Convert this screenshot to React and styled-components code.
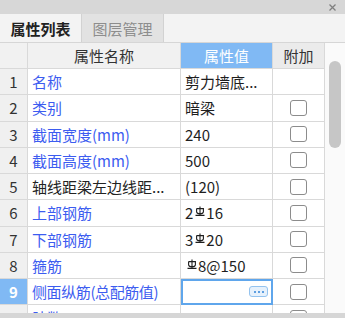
import React from 'react';
import styled, { createGlobalStyle } from 'styled-components';

const GlobalStyle = createGlobalStyle`
    html, body {
        margin: 0;
        padding: 0;
        background: #ffffff;
    }
    body {
        font-family: "Noto Sans CJK SC", "Noto Sans", sans-serif;
    }
`

const Panel = styled.div`
    width: 345px;
    height: 318px;
    display: flex;
    flex-direction: column;
    overflow: hidden;
    background: #f2f2f2;
`

const TitleBar = styled.div`
    height: 14px;
    flex-shrink: 0;
    background: #d7d7d7;
    display: flex;
    justify-content: flex-end;
    align-items: center;
    padding-right: 9px;
`

const TabBar = styled.div`
    height: 29px;
    flex-shrink: 0;
    display: flex;
    background: #f3f3f3;
    border-bottom: 1px solid #d6d6d6;
    box-sizing: border-box;
`

const Tab = styled.div`
    width: 81px;
    display: flex;
    align-items: center;
    justify-content: center;
    font-size: 15px;
    line-height: 1;
    font-weight: ${p => p.$active ? 700 : 400};
    color: ${p => p.$active ? '#222' : '#8d8d8d'};
    background: ${p => p.$active ? '#f3f3f3' : '#e2e2e2'};
    border-right: 1px solid #d2d2d2;
`

const Body = styled.div`
    flex: 1;
    display: flex;
    min-height: 0;
`

const Grid = styled.div`
    width: 325px;
    overflow: hidden;
    background: #ffffff;
`

const Row = styled.div`
    display: grid;
    grid-template-columns: 28px 153px 92px 52px;
    height: ${p => p.$h}px;
`

const Cell = styled.div`
    box-sizing: border-box;
    border-right: 1px solid #d9d9d9;
    border-bottom: 1px solid #d9d9d9;
    display: flex;
    align-items: center;
    padding: 0 4px;
    overflow: hidden;
    white-space: nowrap;
    font-size: 15px;
    line-height: 1;
`

const HeadCell = styled(Cell)`
    justify-content: center;
    color: ${p => p.$tone === 'blue' ? '#ffffff' : '#333333'};
    background: ${p => p.$tone === 'blue' ? '#80b9f4' : p.$tone === 'gray' ? '#ebebeb' : '#f1f1f1'};
`

const NumCell = styled(Cell)`
    justify-content: center;
    background: ${p => p.$selected ? '#80b9f4' : '#f0f0f0'};
    color: ${p => p.$selected ? '#ffffff' : '#333333'};
    font-weight: ${p => p.$selected ? 700 : 400};
`

const NameCell = styled(Cell)`
    color: ${p => p.$plain ? '#222222' : '#3c5cf0'};
    letter-spacing: ${p => p.$squeeze ? '-0.4px' : '0'};
`

const ValueCell = styled(Cell)`
    color: #1e1e1e;
    outline: ${p => p.$editing ? '2px solid #5fa6ec' : 'none'};
    outline-offset: -2px;
`

const AddCell = styled(Cell)`
    justify-content: center;
`

const CheckBox = styled.span`
    width: 17px;
    height: 16px;
    box-sizing: border-box;
    border: 1px solid #8c8c8c;
    border-radius: 3px;
    background: #ffffff;
`

const MoreButton = styled.span`
    margin-left: auto;
    width: 19px;
    height: 11px;
    box-sizing: border-box;
    border: 1px solid #94c3ef;
    border-radius: 3px;
    background: #e6f1fc;
    display: flex;
    align-items: center;
    justify-content: center;
    gap: 2px;
`

const Dot = styled.span`
    width: 2px;
    height: 2px;
    background: #5d9ee0;
`

const Scroll = styled.div`
    flex: 1;
    background: #fafafa;
    padding: 18px 0 0 4px;
`

const Thumb = styled.div`
    width: 12px;
    height: 87px;
    border-radius: 6px;
    background: #c6c6c6;
`

const BottomBar = styled.div`
    height: 5px;
    flex-shrink: 0;
    background: #d6d6d6;
`

const RebarIcon = styled.svg`
    margin: 0 1px 0 2px;
    align-self: flex-start;
    margin-top: 6px;
`

const Rebar = () => (
    <RebarIcon width="10" height="10" viewBox="0 0 10 10">
        <path
            d="M5 0.5V9 M1.6 2.6V5.8Q1.6 7.8 5 7.8Q8.4 7.8 8.4 5.8V2.6H1.6 M0.5 9.4H9.5"
            stroke="#1e1e1e"
            strokeWidth="1.1"
            fill="none"
        />
    </RebarIcon>
)

const CloseIcon = () => (
    <svg width="7" height="7" viewBox="0 0 7 7">
        <path d="M0.5 0.5L6.5 6.5M6.5 0.5L0.5 6.5" stroke="#808080" strokeWidth="1.3" />
    </svg>
)

const rows = [
    { n: 1, name: '名称', value: '剪力墙底...', check: false },
    { n: 2, name: '类别', value: '暗梁', check: true },
    { n: 3, name: '截面宽度(mm)', value: '240', check: true },
    { n: 4, name: '截面高度(mm)', value: '500', check: true },
    { n: 5, name: '轴线距梁左边线距...', plain: true, value: '(120)', check: true },
    { n: 6, name: '上部钢筋', bar: ['2', '16'], check: true },
    { n: 7, name: '下部钢筋', bar: ['3', '20'], check: true },
    { n: 8, name: '箍筋', bar: ['', '8@150'], check: true },
    { n: 9, name: '侧面纵筋(总配筋值)', editing: true, check: true },
    { n: 10, name: '肢数', value: '2', check: true },
]

const renderValue = (row) => {
    if (row.editing) {
        return <MoreButton><Dot /><Dot /><Dot /></MoreButton>;
    }
    if (row.bar) {
        return <>{row.bar[0]}<Rebar />{row.bar[1]}</>;
    }
    return row.value;
}

export default function App() {
    return (
        <Panel>
            <GlobalStyle />
            <TitleBar><CloseIcon /></TitleBar>
            <TabBar>
                <Tab $active>属性列表</Tab>
                <Tab>图层管理</Tab>
            </TabBar>
            <Body>
                <Grid>
                    <Row $h={26}>
                        <HeadCell />
                        <HeadCell>属性名称</HeadCell>
                        <HeadCell $tone="blue">属性值</HeadCell>
                        <HeadCell $tone="gray">附加</HeadCell>
                    </Row>
                    {rows.map(row => (
                        <Row key={row.n} $h={26.25}>
                            <NumCell $selected={row.editing}>{row.n}</NumCell>
                            <NameCell $plain={row.plain} $squeeze={row.editing}>{row.name}</NameCell>
                            <ValueCell $editing={row.editing}>{renderValue(row)}</ValueCell>
                            <AddCell>{row.check && <CheckBox />}</AddCell>
                        </Row>
                    ))}
                </Grid>
                <Scroll><Thumb /></Scroll>
            </Body>
            <BottomBar />
        </Panel>
    );
}
